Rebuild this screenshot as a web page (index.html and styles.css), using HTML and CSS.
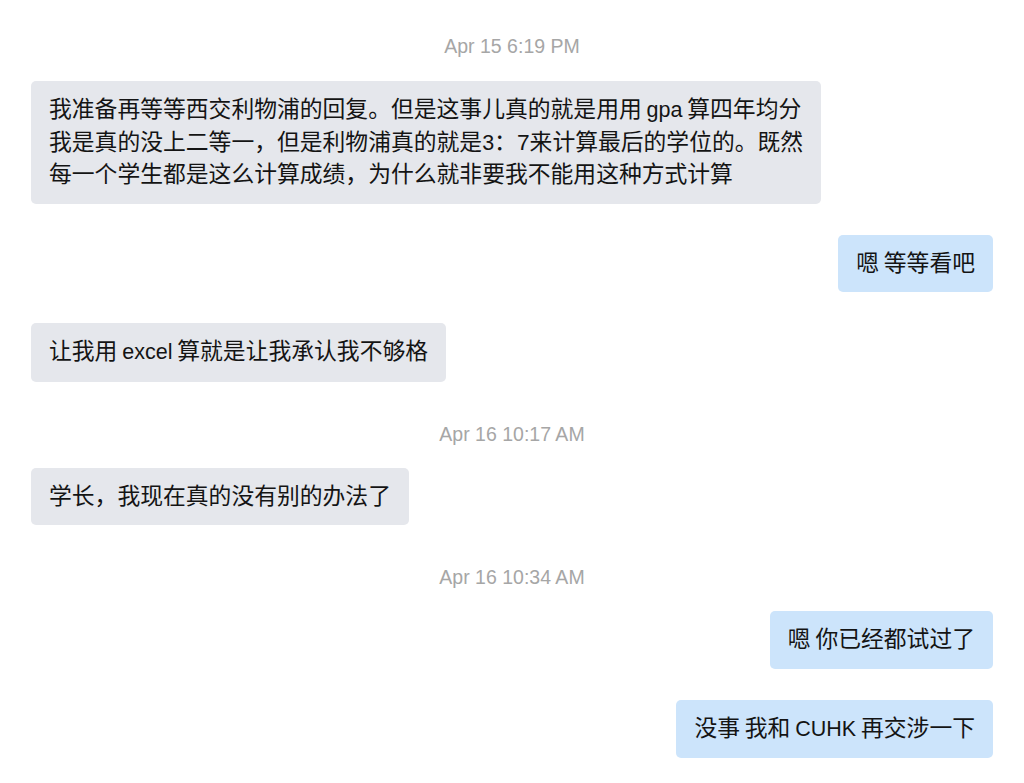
FILE: index.html
```html
<!DOCTYPE html>
<html lang="zh-CN">
<head>
<meta charset="utf-8">
<title>Chat</title>
<link rel="stylesheet" href="styles.css">
</head>
<body>
<div class="chat">
  <div class="ts first">Apr 15 6:19 PM</div>
  <div class="msg in">我准备再等等西交利物浦的回复。但是这事儿真的就是用用 <span class="lat">gpa</span> 算四年均分<br>我是真的没上二等一，但是利物浦真的就是<span class="lat">3</span>：7来计算最后的学位的。既然<br>每一个学生都是这么计算成绩，为什么就非要我不能用这种方式计算</div>
  <div class="msg out">嗯 等等看吧</div>
  <div class="msg in">让我用 <span class="lat">excel</span> 算就是让我承认我不够格</div>
  <div class="ts">Apr 16 10:17 AM</div>
  <div class="msg in">学长，我现在真的没有别的办法了</div>
  <div class="ts">Apr 16 10:34 AM</div>
  <div class="msg out">嗯 你已经都试过了</div>
  <div class="msg out">没事 我和 <span class="lat">CUHK</span> 再交涉一下</div>
</div>
</body>
</html>
```
FILE: styles.css
```css
html, body {
  margin: 0;
  padding: 0;
  background: #ffffff;
}
body {
  width: 1024px;
  height: 783px;
  overflow: hidden;
  font-family: "Liberation Sans", "Noto Sans CJK SC", sans-serif;
}
.chat {
  display: flex;
  flex-direction: column;
  padding: 35px 31px 0 31px;
}
.ts {
  align-self: center;
  height: 22px;
  line-height: 22px;
  font-size: 19.5px;
  color: #a6a6a6;
  margin-top: 10px;
  margin-bottom: 23px;
}
.ts.first {
  margin-top: 0;
  margin-bottom: 24px;
}
.msg {
  font-family: "Liberation Sans", "Noto Sans CJK SC", sans-serif;
  font-size: 22.8px;
  line-height: 31.5px;
  word-spacing: -1.5px;
  color: #141414;
  padding: 13px 18px 13px 18px;
  border-radius: 5px;
  margin-bottom: 31px;
  max-width: 790px;
  width: fit-content;
}
.lat {
  font-size: 21.5px;
}
.msg.in {
  align-self: flex-start;
  background: #e5e7ec;
}
.msg.out {
  align-self: flex-end;
  background: #cce4fb;
}
```
